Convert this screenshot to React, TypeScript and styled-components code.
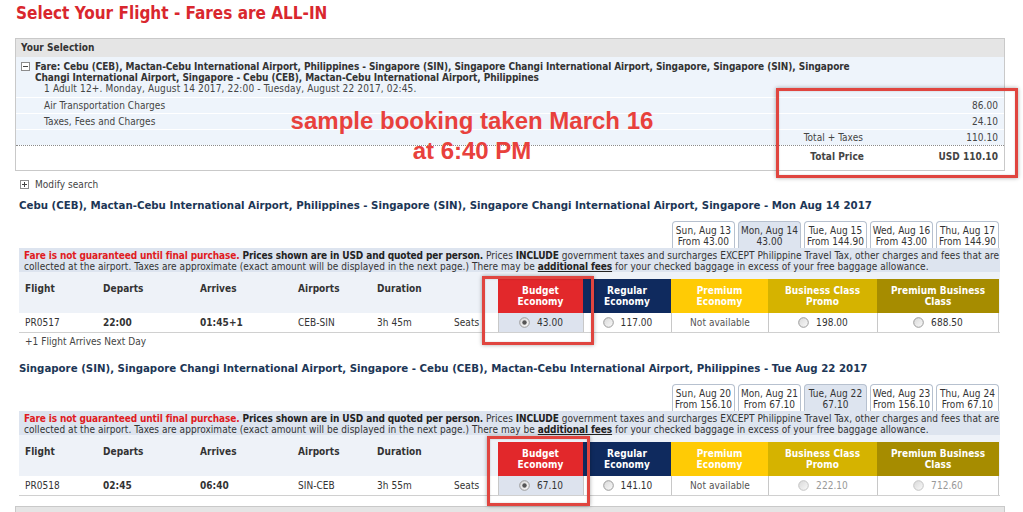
import React from 'react';
import styled, { createGlobalStyle } from 'styled-components';

const FONT = '"DejaVu Sans Condensed", "DejaVu Sans", Verdana, sans-serif';

const GlobalStyle = createGlobalStyle`
  html, body { margin: 0; padding: 0; background: #fff; }
  body { font-family: ${FONT}; font-size: 10px; letter-spacing: 0.05px; color: #333; }
  * { box-sizing: border-box; }
`;

const Page = styled.div`
  position: relative;
  width: 1023px;
  height: 512px;
  overflow: hidden;
  padding: 0 18px 0 15px;
`;

const Title = styled.h1`
  margin: 0;
  height: 38px;
  padding: 1px 0 0 1px;
  font: bold 17px/24px ${FONT};
  letter-spacing: 0;
  color: #d9272e;
`;

const SelectionBox = styled.div`
  border: 1px solid #c9c9c9;
  height: 133px;
  display: flex;
  flex-direction: column;
`;

const BoxHeader = styled.div`
  height: 18px;
  line-height: 18px;
  padding-left: 5px;
  background: #e5e5e5;
  font-weight: bold;
  color: #333;
`;

const BoxBody = styled.div`
  background: #eef4fb;
  padding-top: 4px;
`;

const FareLine = styled.div`
  display: flex;
  align-items: flex-start;
  gap: 5px;
  padding-left: 5px;
  line-height: 11px;
  font-weight: bold;
  letter-spacing: -0.08px;
  color: #333;
  white-space: nowrap;
`;

const IconWrap = styled.span`
  display: inline-flex;
  padding-top: 1px;
`;

const Passenger = styled.div`
  padding-left: 28px;
  line-height: 12px;
  height: 14px;
  letter-spacing: 0.15px;
  color: #444;
`;

const ChargeRow = styled.div<{ $total?: boolean }>`
  display: grid;
  grid-template-columns: 1fr 200px 134px;
  height: ${(p) => (p.$total ? '22px' : '16px')};
  line-height: ${(p) => (p.$total ? '21px' : '15px')};
  padding: 0 6px 0 28px;
  border-top: ${(p) => (p.$total ? '1px dotted #8a8a8a' : '1px solid #fff')};
  background: ${(p) => (p.$total ? '#fff' : '#eef4fb')};
  font-weight: ${(p) => (p.$total ? 'bold' : 'normal')};
  color: #444;
`;

const RightCell = styled.span<{ $pad?: number }>`
  text-align: right;
  padding-right: ${(p) => p.$pad ?? 0}px;
`;

const Modify = styled.div`
  margin-top: 7px;
  height: 12px;
  display: flex;
  align-items: center;
  gap: 6px;
  padding-left: 5px;
  color: #444;
`;

const Section = styled.div<{ $gap: number }>`
  margin: ${(p) => p.$gap}px 5px 0 4px;
`;

const Heading = styled.h2`
  margin: 0;
  font: bold 11.35px/18px ${FONT};
  letter-spacing: 0;
  color: #1c3656;
  white-space: nowrap;
`;

const Tabs = styled.div`
  margin-top: 7px;
  display: flex;
  justify-content: flex-end;
  gap: 3px;
  padding-right: 1px;
`;

const Tab = styled.div<{ $active?: boolean }>`
  width: 63px;
  height: 27px;
  padding-top: 3px;
  border: 1px solid #b7c1cf;
  border-bottom: none;
  border-radius: 4px 4px 0 0;
  background: ${(p) => (p.$active ? '#dde4ef' : '#fff')};
  text-align: center;
  line-height: 11px;
  color: #333;
  white-space: nowrap;
`;

const Notice = styled.div`
  background: #dde4ef;
  height: 24px;
  padding: 2px 5px 0;
  line-height: 11px;
  color: #333;
  white-space: nowrap;
`;

const Red = styled.b`
  color: #e01b22;
  letter-spacing: -0.12px;
`;

const Dark = styled.b`
  color: #222;
  letter-spacing: -0.12px;
`;

const FeeLink = styled.b`
  color: #222;
  letter-spacing: -0.1px;
  text-decoration: underline;
`;

const Grid = styled.div<{ $head?: boolean }>`
  display: grid;
  grid-template-columns: 78px 97px 98px 79px 77px 50px 85px 88px 97px 109px 122px;
  height: ${(p) => (p.$head ? '41px' : '20px')};
  background: ${(p) => (p.$head ? '#eef2f8' : '#fff')};
  border-bottom: ${(p) => (p.$head ? 'none' : '1px solid #d0d0d0')};
`;

const HeadCell = styled.div`
  padding: 11px 0 0 6px;
  font-weight: bold;
  color: #333;
  line-height: 11px;
`;

const ClassHead = styled.div<{ $bg: string }>`
  margin-top: 7px;
  height: 34px;
  background: ${(p) => p.$bg};
  color: #fff;
  font-weight: bold;
  line-height: 11px;
  text-align: center;
  display: flex;
  align-items: center;
  justify-content: center;
`;

const Cell = styled.div<{ $bold?: boolean }>`
  padding-left: 6px;
  line-height: 19px;
  font-weight: ${(p) => (p.$bold ? 'bold' : 'normal')};
  color: #333;
`;

const FareCell = styled.div<{ $selected?: boolean; $tone: string }>`
  display: flex;
  align-items: center;
  justify-content: center;
  gap: 7px;
  border-left: 1px solid #c8c8c8;
  background: ${(p) => (p.$selected ? '#dde3ee' : '#fff')};
  color: ${(p) => p.$tone};
  &:last-child { border-right: 1px solid #c8c8c8; }
`;

const Note = styled.div`
  margin-top: 2px;
  padding-left: 6px;
  line-height: 14px;
  color: #444;
`;

const NextBox = styled.div`
  margin-top: 10px;
  height: 22px;
  border: 1px solid #c9c9c9;
  background: #e5e5e5;
`;

const Callout = styled.div`
  position: absolute;
  border: 3px solid #e0453f;
  box-shadow: 0 0 4px rgba(0, 0, 0, 0.35), inset 0 0 2px rgba(0, 0, 0, 0.2);
  pointer-events: none;
`;

const Stamp = styled.div`
  position: absolute;
  left: 262px;
  top: 106px;
  width: 420px;
  text-align: center;
  font: bold 24px/30px "Liberation Sans", Arial, sans-serif;
  letter-spacing: 0;
  color: #e8413c;
`;

const BoxIcon = ({ plus }: { plus?: boolean }) => (
  <svg width="9" height="9" viewBox="0 0 9 9">
    <rect x="0.5" y="0.5" width="8" height="8" fill="#fff" stroke="#8c8c8c" />
    <line x1="2" y1="4.5" x2="7" y2="4.5" stroke="#444" />
    {plus && <line x1="4.5" y1="2" x2="4.5" y2="7" stroke="#444" />}
  </svg>
);

const Radio = ({ checked, muted }: { checked?: boolean; muted?: boolean }) => (
  <svg width="11" height="11" viewBox="0 0 11 11">
    <defs>
      <linearGradient id="rg" x1="0" y1="0" x2="1" y2="1">
        <stop offset="0" stopColor="#d8d8d8" />
        <stop offset="1" stopColor="#fafafa" />
      </linearGradient>
    </defs>
    <circle cx="5.5" cy="5.5" r="4.8" fill="url(#rg)" stroke={muted ? '#c4c4c4' : '#9a9a9a'} />
    {checked && <circle cx="5.5" cy="5.5" r="2.2" fill="#555" />}
  </svg>
);

type Fare = { price?: string; selected?: boolean; muted?: boolean };
type Flight = {
  gap: number;
  heading: string;
  tabs: { day: string; price: string; active?: boolean }[];
  flight: string;
  departs: string;
  arrives: string;
  airports: string;
  duration: string;
  fares: Fare[];
  note?: boolean;
};

const classes = [
  { label: ['Budget', 'Economy'], bg: '#e2282b' },
  { label: ['Regular', 'Economy'], bg: '#0f2a5e' },
  { label: ['Premium', 'Economy'], bg: '#ffcb05' },
  { label: ['Business Class', 'Promo'], bg: '#d5b300' },
  { label: ['Premium Business', 'Class'], bg: '#a68c00' },
];

const flights: Flight[] = [
  {
    gap: 6,
    heading:
      'Cebu (CEB), Mactan-Cebu International Airport, Philippines - Singapore (SIN), Singapore Changi International Airport, Singapore - Mon Aug 14 2017',
    tabs: [
      { day: 'Sun, Aug 13', price: 'From 43.00' },
      { day: 'Mon, Aug 14', price: '43.00', active: true },
      { day: 'Tue, Aug 15', price: 'From 144.90' },
      { day: 'Wed, Aug 16', price: 'From 43.00' },
      { day: 'Thu, Aug 17', price: 'From 144.90' },
    ],
    flight: 'PR0517',
    departs: '22:00',
    arrives: '01:45+1',
    airports: 'CEB-SIN',
    duration: '3h 45m',
    fares: [
      { price: '43.00', selected: true },
      { price: '117.00' },
      {},
      { price: '198.00' },
      { price: '688.50' },
    ],
    note: true,
  },
  {
    gap: 10,
    heading:
      'Singapore (SIN), Singapore Changi International Airport, Singapore - Cebu (CEB), Mactan-Cebu International Airport, Philippines - Tue Aug 22 2017',
    tabs: [
      { day: 'Sun, Aug 20', price: 'From 156.10' },
      { day: 'Mon, Aug 21', price: 'From 67.10' },
      { day: 'Tue, Aug 22', price: '67.10', active: true },
      { day: 'Wed, Aug 23', price: 'From 156.10' },
      { day: 'Thu, Aug 24', price: 'From 67.10' },
    ],
    flight: 'PR0518',
    departs: '02:45',
    arrives: '06:40',
    airports: 'SIN-CEB',
    duration: '3h 55m',
    fares: [
      { price: '67.10', selected: true },
      { price: '141.10' },
      {},
      { price: '222.10', muted: true },
      { price: '712.60', muted: true },
    ],
  },
];

const toneOf = (fare: Fare) => (fare.muted ? '#999' : fare.price ? '#333' : '#555');

const FlightBlock = ({ f }: { f: Flight }) => (
  <Section $gap={f.gap}>
    <Heading>{f.heading}</Heading>
    <Tabs>
      {f.tabs.map((t) => (
        <Tab key={t.day} $active={t.active}>
          {t.day}
          <br />
          {t.price}
        </Tab>
      ))}
    </Tabs>
    <Notice>
      <Red>Fare is not guaranteed until final purchase.</Red>{' '}
      <Dark>Prices shown are in USD and quoted per person.</Dark> Prices <Dark>INCLUDE</Dark> government
      taxes and surcharges EXCEPT Philippine Travel Tax, other charges and fees that are
      <br />
      collected at the airport. Taxes are approximate (exact amount will be displayed in the next page.) There
      may be <FeeLink>additional fees</FeeLink> for your checked baggage in excess of your free baggage
      allowance.
    </Notice>
    <Grid $head>
      <HeadCell>Flight</HeadCell>
      <HeadCell>Departs</HeadCell>
      <HeadCell>Arrives</HeadCell>
      <HeadCell>Airports</HeadCell>
      <HeadCell>Duration</HeadCell>
      <HeadCell />
      {classes.map((c) => (
        <ClassHead key={c.label.join()} $bg={c.bg}>
          {c.label[0]}
          <br />
          {c.label[1]}
        </ClassHead>
      ))}
    </Grid>
    <Grid>
      <Cell>{f.flight}</Cell>
      <Cell $bold>{f.departs}</Cell>
      <Cell $bold>{f.arrives}</Cell>
      <Cell>{f.airports}</Cell>
      <Cell>{f.duration}</Cell>
      <Cell>Seats</Cell>
      {f.fares.map((fare, i) => (
        <FareCell key={i} $selected={fare.selected} $tone={toneOf(fare)}>
          {fare.price ? (
            <>
              <Radio checked={fare.selected} muted={fare.muted} />
              <span>{fare.price}</span>
            </>
          ) : (
            <span>Not available</span>
          )}
        </FareCell>
      ))}
    </Grid>
    {f.note && <Note>+1 Flight Arrives Next Day</Note>}
  </Section>
);

export default function App() {
  return (
    <>
      <GlobalStyle />
      <Page>
        <Title>Select Your Flight - Fares are ALL-IN</Title>
        <SelectionBox>
          <BoxHeader>Your Selection</BoxHeader>
          <BoxBody>
            <FareLine>
              <IconWrap>
                <BoxIcon />
              </IconWrap>
              <span>
                Fare: Cebu (CEB), Mactan-Cebu International Airport, Philippines - Singapore (SIN), Singapore
                Changi International Airport, Singapore, Singapore (SIN), Singapore
                <br />
                Changi International Airport, Singapore - Cebu (CEB), Mactan-Cebu International Airport,
                Philippines
              </span>
            </FareLine>
            <Passenger>1 Adult 12+. Monday, August 14 2017, 22:00 - Tuesday, August 22 2017, 02:45.</Passenger>
          </BoxBody>
          <ChargeRow>
            <span>Air Transportation Charges</span>
            <span />
            <RightCell>86.00</RightCell>
          </ChargeRow>
          <ChargeRow>
            <span>Taxes, Fees and Charges</span>
            <span />
            <RightCell>24.10</RightCell>
          </ChargeRow>
          <ChargeRow>
            <span />
            <RightCell $pad={1}>Total + Taxes</RightCell>
            <RightCell>110.10</RightCell>
          </ChargeRow>
          <ChargeRow $total>
            <span />
            <RightCell>Total Price</RightCell>
            <RightCell>USD 110.10</RightCell>
          </ChargeRow>
        </SelectionBox>
        <Modify>
          <BoxIcon plus />
          <span>Modify search</span>
        </Modify>
        {flights.map((f) => (
          <FlightBlock key={f.flight} f={f} />
        ))}
        <NextBox />
        <Stamp>
          sample booking taken March 16
          <br />
          at 6:40 PM
        </Stamp>
        <Callout style={{ left: 776, top: 88, width: 242, height: 90 }} />
        <Callout style={{ left: 482, top: 276, width: 112, height: 69 }} />
        <Callout style={{ left: 487, top: 436, width: 103, height: 70 }} />
      </Page>
    </>
  );
}
